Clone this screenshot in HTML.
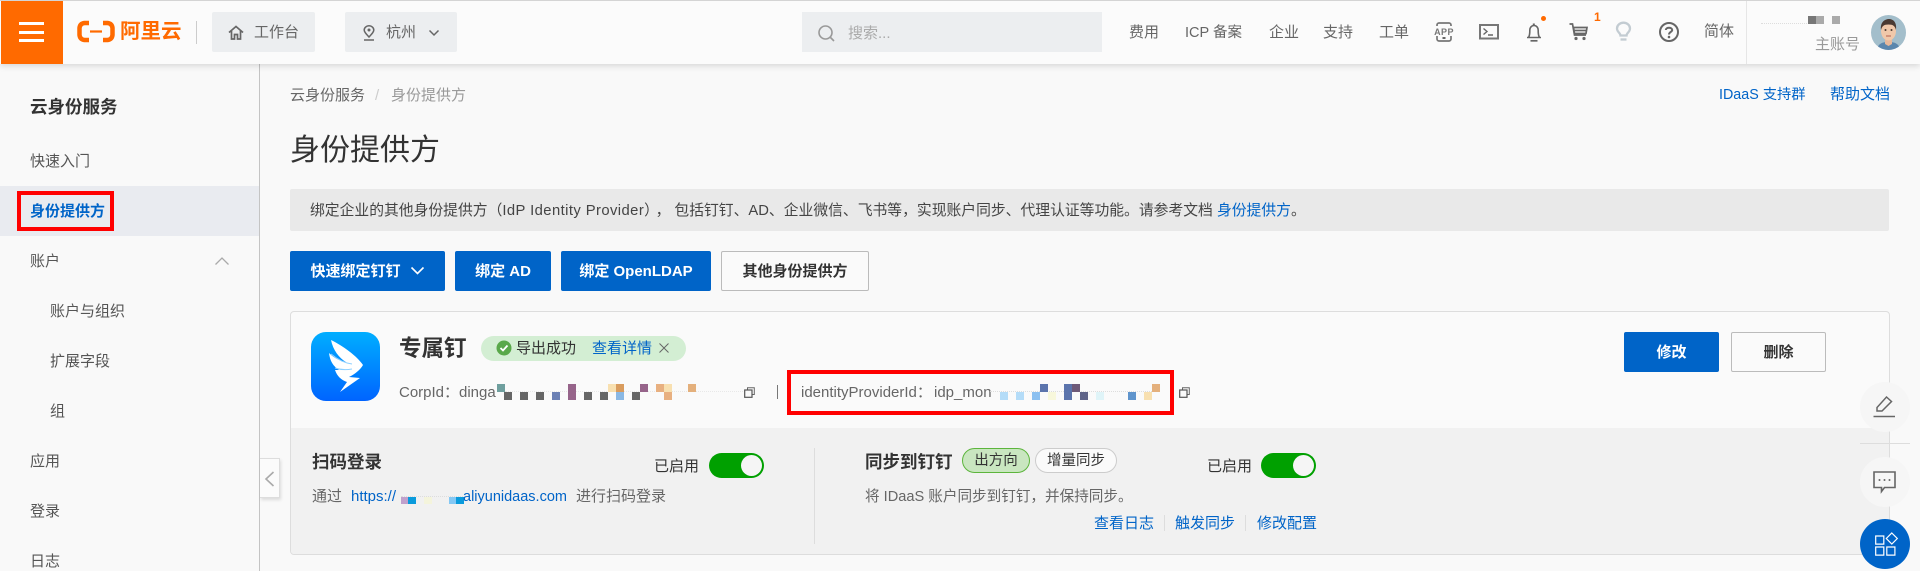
<!DOCTYPE html>
<html lang="zh-CN">
<head>
<meta charset="utf-8">
<title>身份提供方</title>
<style>
html,body{margin:0;padding:0;width:1920px;height:571px;overflow:hidden;background:#f9f9f9}
body{position:relative;font-family:"Liberation Sans","Noto Sans CJK SC",sans-serif;font-size:15px;color:#333}
.a{position:absolute}
.t{position:absolute;white-space:nowrap;line-height:20px;height:20px}
.g{color:#666}
.l{color:#0064c8}
.b{font-weight:700}
.btn{position:absolute;box-sizing:border-box;height:40px;top:251px;border-radius:2px;text-align:center;line-height:41px;font-size:15px;font-weight:700;white-space:nowrap}
.pri{background:#0064c8;color:#fff}
.sec{background:#fafafa;border:1px solid #bbb;color:#333;line-height:39px}
.p{position:absolute;width:8px;height:8px}
.tog{position:absolute;width:55px;height:25px;border-radius:13px;background:#00a000}
.tog i{position:absolute;right:2px;top:2px;width:21px;height:21px;border-radius:50%;background:#f5f5f5}
.circ{position:absolute;left:1860px;width:50px;height:50px;border-radius:50%;background:#f6f6f6}
svg{position:absolute;overflow:visible}
</style>
</head>
<body>
<!-- header -->
<div class="a" style="left:0;top:0;width:1920px;height:64px;background:#fbfbfb;border-top:1px solid #d4d4d4;box-sizing:border-box;box-shadow:0 2px 6px rgba(0,0,0,.14);z-index:5"></div>
<div style="position:absolute;left:0;top:0;width:1920px;height:64px;z-index:6">
  <div class="a" style="left:1px;top:1px;width:62px;height:63px;background:#ff6a00"></div>
  <div class="a" style="left:19px;top:22px;width:25px;height:3px;background:#fff"></div>
  <div class="a" style="left:19px;top:31px;width:25px;height:3px;background:#fff"></div>
  <div class="a" style="left:19px;top:39px;width:25px;height:3px;background:#fff"></div>

  <svg style="left:77px;top:20px" width="38" height="23" viewBox="0 0 38 23"><path d="M12 3H7.500Q3 3.500 2.500 8V15Q3 19.500 7.500 20H12M26 3H30.500Q35 3.500 35.500 8V15Q35 19.500 30.500 20H26" fill="none" stroke="#ff6a00" stroke-width="4.500"/><path d="M13 11.500H25" stroke="#ff6a00" stroke-width="2.200"/></svg>
  <div class="t b" style="left:120px;top:21px;font-size:20.500px;line-height:22px;color:#ff6a00;letter-spacing:0">阿里云</div>
  <div class="a" style="left:196px;top:21px;width:1px;height:23px;background:#ccc"></div>

  <div class="a" style="left:212px;top:12px;width:103px;height:40px;background:#eceef0;border-radius:2px"></div>
  <svg style="left:228px;top:25px" width="16" height="15" viewBox="0 0 16 15"><path d="M1 7.500 8 1.500 15 7.500M3.500 6V14H6.500V9.500H9.500V14H12.500V6" fill="none" stroke="#666" stroke-width="1.700"/></svg>
  <div class="t g" style="left:254px;top:23px">工作台</div>
  <div class="a" style="left:345px;top:12px;width:112px;height:40px;background:#eceef0;border-radius:2px"></div>
  <svg style="left:362px;top:25px" width="14" height="16" viewBox="0 0 14 16"><path d="M7 12C4 8.800 2.200 7 2.200 5A4.800 4.200 0 0 1 11.800 5C11.800 7 10 8.800 7 12Z" fill="none" stroke="#666" stroke-width="1.500"/><circle cx="7" cy="5" r="1.500" fill="#666"/><path d="M2 15H12" stroke="#666" stroke-width="1.500"/></svg>
  <div class="t g" style="left:386px;top:23px">杭州</div>
  <svg style="left:428px;top:29px" width="12" height="8" viewBox="0 0 12 8"><path d="M1.500 1.500 6 6 10.500 1.500" fill="none" stroke="#666" stroke-width="1.500"/></svg>

  <div class="a" style="left:802px;top:12px;width:300px;height:40px;background:#eceef0"></div>
  <svg style="left:818px;top:25px" width="17" height="17" viewBox="0 0 17 17"><circle cx="7.500" cy="7.500" r="6.500" fill="none" stroke="#999" stroke-width="1.600"/><path d="M12.500 12.500 16 16" stroke="#999" stroke-width="1.600"/></svg>
  <div class="t" style="left:848px;top:24px;color:#aaa">搜索...</div>

  <div class="t g" style="left:1129px;top:23px">费用</div>
  <div class="t g" style="left:1185px;top:23px;font-size:14.500px">ICP 备案</div>
  <div class="t g" style="left:1269px;top:23px">企业</div>
  <div class="t g" style="left:1323px;top:23px">支持</div>
  <div class="t g" style="left:1379px;top:23px">工单</div>

  <svg style="left:1434px;top:22px" width="20" height="20" viewBox="0 0 20 20"><rect x="3" y="1" width="14" height="18" rx="2" fill="none" stroke="#777" stroke-width="1.700"/><rect x="0" y="4" width="20" height="10" fill="#fbfbfb"/><rect x="8.500" y="15" width="3" height="2" fill="#666"/><text x="10" y="13" text-anchor="middle" font-family="Liberation Sans, sans-serif" font-weight="700" font-size="9" letter-spacing=".4" fill="#777">APP</text></svg>

  <svg style="left:1479px;top:24px" width="20" height="16" viewBox="0 0 20 16"><rect x="1" y="1" width="18" height="13.500" fill="none" stroke="#777" stroke-width="2"/><path d="M4.500 4.500 8 7.500 4.500 10.500M9 11H14" fill="none" stroke="#666" stroke-width="1.400"/></svg>

  <svg style="left:1526px;top:22px" width="16" height="20" viewBox="0 0 16 20"><path d="M1 15.500H15M2.500 15.500C4 13 3.800 10 3.800 8A4.200 4.500 0 0 1 12.200 8C12.200 10 12 13 13.500 15.500" fill="none" stroke="#666" stroke-width="1.600"/><path d="M7.800 1.500V3.500" stroke="#666" stroke-width="2"/><path d="M4.500 18.800H11.500" stroke="#666" stroke-width="1.700"/></svg>
  <div class="a" style="left:1541px;top:16px;width:5px;height:5px;border-radius:50%;background:#ff6a00"></div>

  <svg style="left:1569px;top:23px" width="19" height="18" viewBox="0 0 19 18"><path d="M.500 1H3.500L5.500 12H17" fill="none" stroke="#666" stroke-width="1.700"/><path d="M4.500 4.500H18L17 10.500H5.500Z" fill="none" stroke="#666" stroke-width="1.700"/><path d="M5 7.500H17" stroke="#666" stroke-width="1.700"/><circle cx="7" cy="15.500" r="1.600" fill="#666"/><circle cx="15" cy="15.500" r="1.600" fill="#666"/></svg>
  <div class="t b" style="left:1594px;top:7px;font-size:12px;color:#ff6a00">1</div>

  <svg style="left:1616px;top:22px" width="15" height="20" viewBox="0 0 15 20"><path d="M4.500 13.500C4.500 11 1 10 1 6.500A6.500 5.800 0 0 1 14 6.500C14 10 10.500 11 10.500 13.500Z" fill="none" stroke="#c3ccd2" stroke-width="2.300"/><path d="M4.500 17.500H10.500" stroke="#c3ccd2" stroke-width="2.300"/></svg>

  <svg style="left:1659px;top:22px" width="20" height="20" viewBox="0 0 20 20"><circle cx="10" cy="10" r="9" fill="none" stroke="#666" stroke-width="2"/><path d="M6.800 8C6.800 5 13.200 5 13.200 8C13.200 10 10 10 10 12.500" fill="none" stroke="#666" stroke-width="2"/><circle cx="10" cy="15" r="1.300" fill="#666"/></svg>

  <div class="t g" style="left:1704px;top:22px">简体</div>
  <div class="a" style="left:1746px;top:1px;width:1px;height:63px;background:#e6e6e6"></div>
  <div class="a" style="left:1761px;top:23px;width:46px;height:0;border-top:1px dotted #ddd"></div>
  <div class="p" style="left:1808px;top:16px;background:#777"></div>
  <div class="p" style="left:1816px;top:16px;background:#aaa"></div>
  <div class="p" style="left:1832px;top:16px;background:#aaa"></div>
  <div class="t" style="left:1815px;top:35px;color:#999">主账号</div>

  <svg style="left:1871px;top:15px" width="35" height="35" viewBox="0 0 35 35"><clipPath id="av"><circle cx="17.500" cy="17.500" r="17.500"/></clipPath><g clip-path="url(#av)"><rect width="35" height="35" fill="#a3becb"/><path d="M6 35C7 28 12 27 17.500 27S28 28 29 35Z" fill="#5b86ad"/><path d="M14 22H21V29L17.500 31 14 29Z" fill="#e8b89a"/><ellipse cx="17.500" cy="16" rx="7.500" ry="9.500" fill="#f0c8aa"/><path d="M10 15C9 7 14 4 18 4S26 7 25 15C24 11 22 9.500 17.500 9.500S11 11 10 15Z" fill="#4a3a33"/><circle cx="14.500" cy="15" r="1" fill="#4a3a33"/><circle cx="20.500" cy="15" r="1" fill="#4a3a33"/><path d="M15 21H20" stroke="#b5604e" stroke-width="1"/></g></svg>
</div>

<!-- sidebar -->
<div class="a" style="left:0;top:64px;width:259px;height:507px;background:#f9f9f9;border-right:1px solid #c4c4c4"></div>
<div class="t b" style="left:30px;top:97px;font-size:17.500px;color:#333">云身份服务</div>
<div class="t" style="left:30px;top:152px;color:#555">快速入门</div>
<div class="a" style="left:0;top:186px;width:259px;height:50px;background:#e9ebf0"></div>
<div class="t b l" style="left:30px;top:202px">身份提供方</div>
<div class="a" style="left:17px;top:191px;width:97px;height:40px;box-sizing:border-box;border:4px solid #f00"></div>
<div class="t" style="left:30px;top:252px;color:#555">账户</div>
<svg style="left:214px;top:256px" width="16" height="10" viewBox="0 0 16 10"><path d="M1.500 8.500 8 2 14.500 8.500" fill="none" stroke="#aaa" stroke-width="1.300"/></svg>
<div class="t" style="left:50px;top:302px;color:#555">账户与组织</div>
<div class="t" style="left:50px;top:352px;color:#555">扩展字段</div>
<div class="t" style="left:50px;top:402px;color:#555">组</div>
<div class="t" style="left:30px;top:452px;color:#555">应用</div>
<div class="t" style="left:30px;top:502px;color:#555">登录</div>
<div class="t" style="left:30px;top:552px;color:#555">日志</div>

<!-- collapse handle -->
<div class="a" style="left:260px;top:458px;width:20px;height:40px;box-sizing:border-box;background:#fbfbfb;border:1px solid #ddd;border-left:0;box-shadow:1px 2px 3px rgba(0,0,0,.12);z-index:3"></div>
<svg style="left:264px;top:471px;z-index:4" width="11" height="16" viewBox="0 0 11 16"><path d="M9.500 1 2 8 9.500 15" fill="none" stroke="#aaa" stroke-width="1.600"/></svg>

<!-- main -->
<div class="t" style="left:290px;top:86px;color:#666">云身份服务</div>
<div class="t" style="left:375px;top:86px;color:#ccc">/</div>
<div class="t" style="left:391px;top:86px;color:#999">身份提供方</div>
<div class="t l" style="left:1719px;top:85px;font-size:14.300px">IDaaS 支持群</div>
<div class="t l" style="left:1830px;top:85px">帮助文档</div>
<div class="t" style="left:290px;top:131px;font-size:30px;line-height:40px;height:40px;color:#333">身份提供方</div>

<div class="a" style="left:290px;top:189px;width:1599px;height:42px;background:#e9e9e9;border-radius:2px"></div>
<div class="t" style="left:310px;top:201px;color:#444;font-size:14.800px">绑定企业的其他身份提供方（<span style="letter-spacing:.42px">IdP Identity Provider</span>）<span style="margin:0 4px 0 4px">，</span>包括钉钉、AD、企业微信、飞书等，实现账户同步、代理认证等功能。请参考文档 <span class="l">身份提供方</span>。</div>

<div class="btn pri" style="left:290px;width:155px;padding-right:24px">快速绑定钉钉</div>
<svg style="left:410px;top:266px" width="15" height="10" viewBox="0 0 15 10"><path d="M1.500 1.500 7.500 7.500 13.500 1.500" fill="none" stroke="#fff" stroke-width="1.600"/></svg>
<div class="btn pri" style="left:455px;width:96px">绑定 AD</div>
<div class="btn pri" style="left:561px;width:150px">绑定 OpenLDAP</div>
<div class="btn sec" style="left:721px;width:148px">其他身份提供方</div>

<!-- card -->
<div class="a" style="left:290px;top:311px;width:1600px;height:244px;box-sizing:border-box;border:1px solid #ddd;border-radius:4px;background:#fafafa;overflow:hidden">
  <div class="a" style="left:0;top:116px;right:0;bottom:0;background:#f1f1f1"></div>
</div>

<svg style="left:311px;top:332px" width="69" height="69" viewBox="0 0 69 69"><defs><linearGradient id="dt" x1="0" y1="0" x2="0" y2="1"><stop offset="0" stop-color="#00aeff"/><stop offset="1" stop-color="#0064ff"/></linearGradient></defs><rect width="69" height="69" rx="15" fill="url(#dt)"/><path d="M20 8C32 14 46 24 52 33C49 38 44 42 38 45L49 46 29 60 36 50C30 48 26 44 24 38L28 38C22 34 19 29 18 21C24 27 30 29 35 30C28 26 22 18 20 8Z" fill="#fff"/><path d="M20 22C26 27 33 31 41 32M24 36C30 38 36 38 41 37" fill="none" stroke="#8fd0ff" stroke-width="1"/></svg>

<div class="t b" style="left:399px;top:337px;font-size:22.500px;line-height:24px;height:24px;color:#333">专属钉</div>
<div class="a" style="left:481px;top:336px;width:205px;height:25px;border-radius:13px;background:#d3eed3"></div>
<svg style="left:496px;top:340px" width="16" height="16" viewBox="0 0 16 16"><circle cx="8" cy="8" r="7.500" fill="#59a84a"/><path d="M4.500 8 7 10.500 11.500 5.500" fill="none" stroke="#fff" stroke-width="1.800"/></svg>
<div class="t" style="left:516px;top:339px">导出成功</div>
<div class="t l" style="left:592px;top:339px">查看详情</div>
<svg style="left:659px;top:343px" width="10" height="10" viewBox="0 0 10 10"><path d="M.500 .500 9.500 9.500M9.500 .500 .500 9.500" stroke="#666" stroke-width="1"/></svg>

<div class="t g" style="left:399px;top:383px">CorpId：</div>
<div class="t g" style="left:459px;top:383px">dinga</div>
<div class="a" style="left:505px;top:391px;width:240px;border-top:1px dotted #e8e8e8"></div>
<div class="p" style="left:497px;top:384px;background:#6f9f9e"></div>
<div class="p" style="left:504px;top:392px;background:#666"></div>
<div class="p" style="left:520px;top:392px;background:#666"></div>
<div class="p" style="left:536px;top:392px;background:#666"></div>
<div class="p" style="left:552px;top:392px;background:#6b80b4"></div>
<div class="p" style="left:568px;top:384px;height:16px;background:#96648a"></div>
<div class="p" style="left:584px;top:392px;background:#666"></div>
<div class="p" style="left:600px;top:392px;background:#666"></div>
<div class="p" style="left:608px;top:384px;background:#f8e0b0"></div>
<div class="p" style="left:616px;top:384px;background:#d99c5e"></div>
<div class="p" style="left:616px;top:392px;background:#8ab8e4"></div>
<div class="p" style="left:632px;top:392px;background:#666"></div>
<div class="p" style="left:640px;top:384px;background:#96648a"></div>
<div class="p" style="left:656px;top:384px;background:#e8b080"></div>
<div class="p" style="left:664px;top:384px;background:#f8e0b0"></div>
<div class="p" style="left:664px;top:392px;background:#e8b080"></div>
<div class="p" style="left:688px;top:384px;background:#e4b07c"></div>
<svg style="left:744px;top:387px" width="11" height="11" viewBox="0 0 11 11"><path d="M3.500 2.500V.700H10.300V7.500H8.500" fill="none" stroke="#666" stroke-width="1"/><rect x=".700" y="3" width="7.300" height="7.300" fill="none" stroke="#555" stroke-width="1.200"/></svg>

<div class="a" style="left:777px;top:385px;width:1px;height:14px;background:#777"></div>
<div class="t g" style="left:801px;top:383px">identityProviderId：</div>
<div class="t g" style="left:934px;top:383px">idp_mon</div>
<div class="a" style="left:990px;top:391px;width:170px;border-top:1px dotted #ddd"></div>
<div class="p" style="left:1000px;top:392px;background:#b4dcf8"></div>
<div class="p" style="left:1016px;top:392px;background:#b4dcf8"></div>
<div class="p" style="left:1032px;top:392px;background:#8cc0f0"></div>
<div class="p" style="left:1040px;top:384px;background:#5b74ac"></div>
<div class="p" style="left:1048px;top:392px;background:#f8f8dc"></div>
<div class="p" style="left:1064px;top:384px;height:16px;background:#5b74ac"></div>
<div class="p" style="left:1072px;top:384px;background:#6e5a78"></div>
<div class="p" style="left:1080px;top:392px;background:#5f6488"></div>
<div class="p" style="left:1096px;top:392px;background:#dff4f8"></div>
<div class="p" style="left:1128px;top:392px;background:#5f94cc"></div>
<div class="p" style="left:1144px;top:392px;background:#f8e0b0"></div>
<div class="p" style="left:1152px;top:384px;background:#e4b07c"></div>
<div class="a" style="left:787px;top:370px;width:387px;height:45px;box-sizing:border-box;border:4px solid #f00"></div>
<svg style="left:1179px;top:387px" width="11" height="11" viewBox="0 0 11 11"><path d="M3.500 2.500V.700H10.300V7.500H8.500" fill="none" stroke="#666" stroke-width="1"/><rect x=".700" y="3" width="7.300" height="7.300" fill="none" stroke="#555" stroke-width="1.200"/></svg>

<div class="btn pri" style="left:1624px;top:332px;width:95px">修改</div>
<div class="btn sec" style="left:1731px;top:332px;width:95px">删除</div>

<!-- lower panel -->
<div class="t b" style="left:312px;top:452px;font-size:17.500px;color:#333">扫码登录</div>
<div class="t" style="left:654px;top:457px">已启用</div>
<div class="tog" style="left:709px;top:453px"><i></i></div>
<div class="t g" style="left:312px;top:487px">通过</div>
<div class="t l" style="left:351px;top:487px">https://</div>
<div class="a" style="left:401px;top:496px;width:62px;border-top:1px dotted #ddd"></div>
<div class="a" style="left:401px;top:497px;width:8px;height:7px;background:#c0a0cc"></div>
<div class="a" style="left:408px;top:497px;width:8px;height:7px;background:#0a9bdc"></div>
<div class="a" style="left:424px;top:497px;width:8px;height:7px;background:#f4f4dc"></div>
<div class="a" style="left:449px;top:497px;width:8px;height:7px;background:#84c8f4"></div>
<div class="a" style="left:456px;top:497px;width:8px;height:7px;background:#0a9bdc"></div>
<div class="t l" style="left:463px;top:487px;font-size:14.500px">aliyunidaas.com</div>
<div class="t g" style="left:576px;top:487px">进行扫码登录</div>
<div class="a" style="left:814px;top:448px;width:1px;height:96px;background:#ddd"></div>

<div class="t b" style="left:865px;top:452px;font-size:17.500px;color:#333">同步到钉钉</div>
<div class="a" style="left:962px;top:448px;width:68px;height:25px;box-sizing:border-box;border:1px solid #5cb53c;border-radius:13px;background:#c9e6c0;text-align:center;line-height:24px;font-size:14.500px">出方向</div>
<div class="a" style="left:1035px;top:448px;width:82px;height:25px;box-sizing:border-box;border:1px solid #ccc;border-radius:13px;background:#fafafa;text-align:center;line-height:24px;font-size:14.500px">增量同步</div>
<div class="t" style="left:1207px;top:457px">已启用</div>
<div class="tog" style="left:1261px;top:453px"><i></i></div>
<div class="t g" style="left:865px;top:487px;font-size:14.600px">将 IDaaS 账户同步到钉钉，并保持同步。</div>
<div class="t l" style="left:1094px;top:514px">查看日志</div>
<div class="a" style="left:1164px;top:515px;width:1px;height:16px;background:#ddd"></div>
<div class="t l" style="left:1175px;top:514px">触发同步</div>
<div class="a" style="left:1245px;top:515px;width:1px;height:16px;background:#ddd"></div>
<div class="t l" style="left:1257px;top:514px">修改配置</div>

<!-- floating -->
<div class="circ" style="top:382px"></div>
<svg style="left:1873px;top:395px" width="23" height="23" viewBox="0 0 23 23"><path d="M3 16V12.500L12.500 2 17.500 6.500 8 16Z" fill="none" stroke="#666" stroke-width="1.500" transform="translate(1 0)"/><path d="M.500 21.500H22" stroke="#666" stroke-width="1.600"/></svg>
<div class="a" style="left:1860px;top:443px;width:50px;height:1px;background:#ddd"></div>
<div class="circ" style="top:457px"></div>
<svg style="left:1873px;top:471px" width="23" height="22" viewBox="0 0 23 22"><path d="M1 1H22V16.500H11.500L8.500 20.500V16.500H1Z" fill="none" stroke="#666" stroke-width="1.600"/><circle cx="6.500" cy="9" r="1" fill="#666"/><circle cx="11.500" cy="9" r="1" fill="#666"/><circle cx="16.500" cy="9" r="1" fill="#666"/></svg>
<div class="circ" style="top:519px;background:#0064c8"></div>
<svg style="left:1875px;top:532px" width="23" height="24" viewBox="0 0 23 24"><path d="M.700 4H8.800V12.100H.700ZM.700 15H8.800V23.100H.700ZM11.800 15H19.900V23.100H11.800Z" fill="none" stroke="#fff" stroke-width="1.200"/><path d="M16.800 1 22.300 6.500 16.800 12 11.300 6.500Z" fill="none" stroke="#fff" stroke-width="1.200"/></svg>
</body>
</html>
